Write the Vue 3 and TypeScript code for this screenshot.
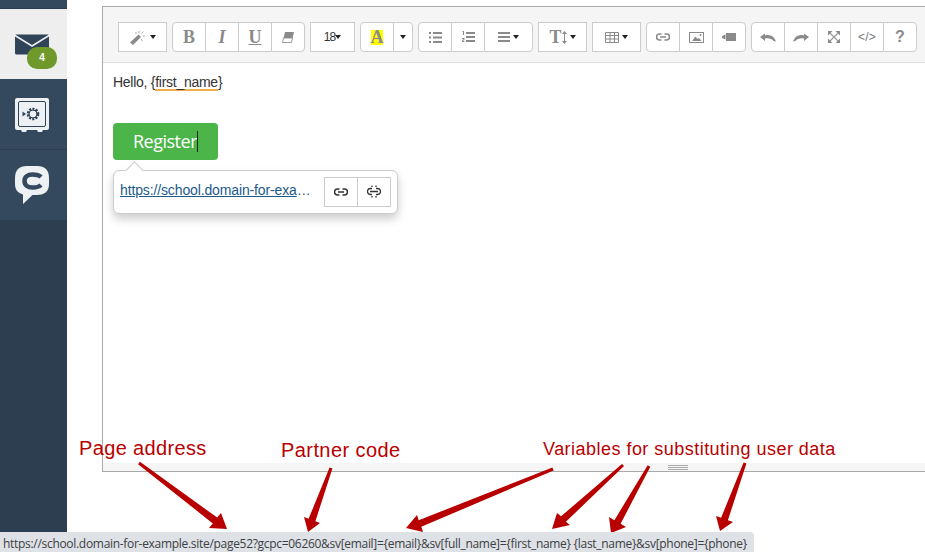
<script setup lang="ts">
type P = [number, number]
interface Arrow { s: P; t: P; a: P; b: P }

const arrows: Arrow[] = [
  { s: [139, 463], t: [227, 529], a: [209, 528], b: [221, 513] },
  { s: [331, 468], t: [308, 532], a: [304, 517], b: [320, 523] },
  { s: [553, 469], t: [406, 528], a: [417, 515], b: [423, 532] },
  { s: [623, 465], t: [552, 529], a: [557, 513], b: [570, 525] },
  { s: [649, 466], t: [611, 533], a: [609, 517], b: [626, 527] },
  { s: [745, 463], t: [720, 531], a: [716, 516], b: [733, 522] },
]

function arrowPoints(x: Arrow): string {
  const dx = x.t[0] - x.s[0]
  const dy = x.t[1] - x.s[1]
  const len = Math.hypot(dx, dy)
  const nx = -dy / len
  const ny = dx / len
  const mid: P = [(x.a[0] + x.b[0]) / 2, (x.a[1] + x.b[1]) / 2]
  const side = (x.a[0] - mid[0]) * nx + (x.a[1] - mid[1]) * ny > 0 ? 1 : -1
  const sw = 1.5
  const bw = 3.6
  const pts: P[] = [
    [x.s[0] + nx * sw * side, x.s[1] + ny * sw * side],
    [mid[0] + nx * bw * side, mid[1] + ny * bw * side],
    x.a,
    x.t,
    x.b,
    [mid[0] - nx * bw * side, mid[1] - ny * bw * side],
    [x.s[0] - nx * sw * side, x.s[1] - ny * sw * side],
  ]
  return pts.map((p) => `${p[0].toFixed(1)},${p[1].toFixed(1)}`).join(' ')
}

const statusUrl =
  'https://school.domain-for-example.site/page52?gcpc=06260&sv[email]={email}&sv[full_name]={first_name} {last_name}&sv[phone]={phone}'
</script>

<template>
  <div class="page">
    <aside class="sidebar">
      <div class="strip"></div>
      <div class="nav-item active">
        <svg width="34" height="21" viewBox="0 0 34 21">
          <path d="M1 0.5H33a1 1 0 0 1 .6 .3L17 11 .4 .8A1 1 0 0 1 1 .5Z" fill="#2f4359" />
          <path d="M0 2.400 17 13 34 2.400V19a1.500 1.500 0 0 1-1.500 1.500h-31A1.500 1.500 0 0 1 0 19Z" fill="#2f4359" />
        </svg>
        <span class="badge">4</span>
      </div>
      <div class="nav-item safe">
        <svg width="34" height="34" viewBox="0 0 34 34">
          <path d="M2 0H32a2 2 0 0 1 2 2V30a2 2 0 0 1-2 2H28l-1 2H23l-1-2H12l-1 2H7l-1-2H2a2 2 0 0 1-2-2V2A2 2 0 0 1 2 0Z" fill="#eef1f3" />
          <rect x="3.500" y="3.500" width="27" height="25" rx="1.500" fill="none" stroke="#2f4359" stroke-width="1" />
          <circle cx="18" cy="16" r="5" fill="none" stroke="#2f4359" stroke-width="2.600" stroke-dasharray="2 1.200" />
          <circle cx="18" cy="16" r="4" fill="none" stroke="#2f4359" stroke-width="1" />
          <path d="M7.500 13.500 11 16l-3.500 2.500Z" fill="#2f4359" />
        </svg>
      </div>
      <div class="nav-item">
        <svg width="34" height="38" viewBox="0 0 34 38">
          <path d="M12 0H22C30 0 34 4 34 12V18C34 25 30 29 22 29H17.500L8 38 8 28.500C3 27 0 24 0 18V12C0 4 4 0 12 0Z" fill="#eef1f3" />
          <path d="M26 11C24 9 21 8.500 17.500 8.500 12.500 8.500 9.500 11 9.500 15S12.500 21.500 17.500 21.500C21 21.500 24 21 26 19" fill="none" stroke="#34495f" stroke-width="4.500" />
        </svg>
      </div>
    </aside>

    <main class="main">
      <section class="editor">
        <div class="toolbar">
          <div class="group">
            <button class="btn w49">
              <svg width="17" height="15" viewBox="0 0 17 15">
                <path d="M0 12.500 8.500 4.500 11 7 3 15Z" fill="#8a8a8a" />
                <path d="M9 1V3.500M11.500 3.500 13.500 1.500M13 6H15M11 9 12.500 11M5 3H7" stroke="#a5a5a5" fill="none" stroke-width="1" />
              </svg>
              <i class="caret"></i>
            </button>
          </div>
          <div class="group">
            <button class="btn"><span class="ser b">B</span></button>
            <button class="btn"><span class="ser it">I</span></button>
            <button class="btn"><span class="ser u">U</span></button>
            <button class="btn">
              <svg width="12" height="11" viewBox="0 0 12 11">
                <path d="M3 0H12L9.500 10.500H0.500Z" fill="#8a8a8a" />
                <path d="M1.500 6H10.500L9.500 10.500H0.500Z" fill="#fff" stroke="#8a8a8a" stroke-width=".8" />
              </svg>
            </button>
          </div>
          <div class="group">
            <button class="btn w45 size">18<i class="caret small"></i></button>
          </div>
          <div class="group">
            <button class="btn"><span class="ser b hl">A</span></button>
            <button class="btn w20"><i class="caret"></i></button>
          </div>
          <div class="group">
            <button class="btn">
              <svg width="13" height="11" viewBox="0 0 13 11" fill="#8a8a8a">
                <path d="M0 0h2v2H0zM4 0h9v2H4zM0 4.500h2v2H0zM4 4.500h9v2H4zM0 9h2v2H0zM4 9h9v2H4z" />
              </svg>
            </button>
            <button class="btn">
              <svg width="13" height="12" viewBox="0 0 13 12" fill="#8a8a8a">
                <path d="M4 1h9v2H4zM4 5h9v2H4zM4 9h9v2H4zM.5 0H2V4H1V1H.5zM0 7H2.500V8.500L1 10H2.500V11H0V9.800L1.500 8.300V8H0z" />
              </svg>
            </button>
            <button class="btn w49">
              <svg width="12" height="10" viewBox="0 0 12 10" fill="#8a8a8a">
                <path d="M0 0h12v2H0zM0 4h12v2H0zM0 8h12v2H0z" />
              </svg>
              <i class="caret"></i>
            </button>
          </div>
          <div class="group">
            <button class="btn w49">
              <span class="ser b lh">T</span>
              <svg width="5" height="13" viewBox="0 0 5 13" fill="#8a8a8a">
                <path d="M2.500 0 5 3H3V10H5L2.500 13 0 10H2V3H0Z" />
              </svg>
              <i class="caret"></i>
            </button>
          </div>
          <div class="group">
            <button class="btn w49">
              <svg width="14" height="11" viewBox="0 0 14 11" fill="none" stroke="#8a8a8a" stroke-width="1">
                <path d="M.5 .5h13v10H.5zM.5 3.500h13M.5 7h13M5 .5v10M9.500 .5v10" />
              </svg>
              <i class="caret"></i>
            </button>
          </div>
          <div class="group">
            <button class="btn">
              <svg width="14" height="8" viewBox="0 0 14 8" fill="none" stroke="#8a8a8a" stroke-width="1.700">
                <path d="M5.500 1H3.500a3 3 0 0 0 0 6H5.500M8.500 1H10.500a3 3 0 0 1 0 6H8.500M4 4H10" />
              </svg>
            </button>
            <button class="btn">
              <svg width="15" height="11" viewBox="0 0 15 11">
                <rect x=".5" y=".5" width="14" height="10" fill="#fff" stroke="#8a8a8a" />
                <path d="M3 9 6.500 4.500 8.500 7 10 6 12.500 9Z" fill="#8a8a8a" />
                <circle cx="11.500" cy="3" r="1" fill="#8a8a8a" />
              </svg>
            </button>
            <button class="btn">
              <svg width="14" height="8" viewBox="0 0 14 8" fill="#8a8a8a">
                <path d="M4 0H14V8H4ZM0 3 3.500 1.500V6.500L0 5Z" />
              </svg>
            </button>
          </div>
          <div class="group">
            <button class="btn">
              <svg width="16" height="9" viewBox="0 0 16 9" fill="#8a8a8a">
                <path d="M0 4 5 .5V2.500C10 1 14 3 16 8.500L13.500 8C12 6 9 5 5 5.500V8Z" />
              </svg>
            </button>
            <button class="btn">
              <svg width="16" height="9" viewBox="0 0 16 9" fill="#8a8a8a">
                <path d="M16 4 11 .5V2.500C6 1 2 3 0 8.500L2.500 8C4 6 7 5 11 5.500V8Z" />
              </svg>
            </button>
            <button class="btn">
              <svg width="12" height="12" viewBox="0 0 12 12">
                <path d="M0 0H4.500L0 4.500ZM12 0V4.500L7.500 0ZM0 12V7.500L4.500 12ZM12 12H7.500L12 7.500Z" fill="#8a8a8a" />
                <path d="M2 2 10 10M10 2 2 10" stroke="#9a9a9a" stroke-width="1.200" />
              </svg>
            </button>
            <button class="btn code">&lt;/&gt;</button>
            <button class="btn help">?</button>
          </div>
        </div>

        <div class="content">
          <p class="hello">Hello, {<span class="var">first_name</span>}</p>
          <div class="cta">Register<span class="text-caret"></span></div>
        </div>

        <div class="resize">
          <span class="grip"></span>
        </div>

        <div class="popover">
          <a class="pop-link"><span class="pop-url">https://school.domain-for-exa</span>…</a>
          <div class="pop-actions">
            <button class="pop-btn">
              <svg width="14" height="8" viewBox="0 0 14 8" fill="none" stroke="#333" stroke-width="1.500">
                <path d="M5.500 1H3.500a3 3 0 0 0 0 6H5.500M8.500 1H10.500a3 3 0 0 1 0 6H8.500M4 4H10" />
              </svg>
            </button>
            <button class="pop-btn">
              <svg width="14" height="14" viewBox="0 0 14 14" fill="none" stroke="#333" stroke-width="1.300">
                <path d="M5 3.500H3.500a3 3 0 0 0 0 6H5M9 3.500H10.500a3 3 0 0 1 0 6H9M3 6.500H11M5 .5V2M9 .5V2M5 11V12.500M9 11V12.500" />
              </svg>
            </button>
          </div>
        </div>
      </section>
    </main>

    <svg class="arrows" width="925" height="552" viewBox="0 0 925 552">
      <polygon v-for="(a, i) in arrows" :key="i" :points="arrowPoints(a)" fill="#b80000" />
    </svg>

    <span class="note n1">Page address</span>
    <span class="note n2">Partner code</span>
    <span class="note n3">Variables for substituting user data</span>

    <div class="status">{{ statusUrl }}</div>
  </div>
</template>

<style>
html, body { margin: 0; overflow: hidden; background: #fff; }
</style>

<style scoped>
.page {
  position: relative;
  display: flex;
  width: 925px;
  height: 552px;
  overflow: hidden;
  background: #fff;
  font-family: "Liberation Sans", Arial, sans-serif;
}
.sidebar {
  width: 67px;
  flex: none;
  background: #2d3e50;
  display: flex;
  flex-direction: column;
}
.strip { height: 9px; background: #34495e; box-shadow: inset 0 -1px 0 #2d3e50; }
.nav-item {
  position: relative;
  height: 70px;
  padding-right: 3px;
  box-sizing: content-box;
  width: 64px;
  background: #34495e;
  border-bottom: 1px solid #2d3e50;
  display: flex;
  align-items: center;
  justify-content: center;
}
.nav-item.active { background: #eee; border-bottom: 0; }
.safe svg { margin-top: 2px; }
.badge {
  position: absolute;
  left: 27px;
  top: 38px;
  width: 30px;
  height: 22px;
  border-radius: 10px;
  background: #6f9a2b;
  color: #fff;
  font: bold 10px/22px "Liberation Sans", sans-serif;
  text-align: center;
}
.main { flex: 1; min-width: 0; padding: 6px 0 0 35px; }
.editor {
  position: relative;
  width: 900px;
  height: 466px;
  box-sizing: border-box;
  border: 1px solid #a9a9a9;
  display: flex;
  flex-direction: column;
}
.toolbar {
  height: 56px;
  flex: none;
  box-sizing: border-box;
  background: #f5f5f5;
  border-bottom: 1px solid #ddd;
  padding: 15px 0 0 15px;
  display: flex;
  gap: 5px;
}
.group { display: flex; height: 30px; }
.btn {
  width: 34px;
  height: 30px;
  padding: 0;
  margin: 0 0 0 -1px;
  box-sizing: border-box;
  background: #fff;
  border: 1px solid #ccc;
  display: flex;
  align-items: center;
  justify-content: center;
  gap: 3px;
  color: #8a8a8a;
  font-family: "Liberation Sans", sans-serif;
}
.group .btn:first-child { margin-left: 0; border-radius: 4px 0 0 4px; }
.group .btn:last-child { border-radius: 0 4px 4px 0; }
.group .btn:only-child { border-radius: 0; }
.w49 { width: 49px; }
.w45 { width: 45px; }
.w20 { width: 20px; }
.caret {
  display: inline-block;
  width: 0;
  height: 0;
  border-left: 3.5px solid transparent;
  border-right: 3.5px solid transparent;
  border-top: 4px solid #222;
}
.caret.small { border-left-width: 3px; border-right-width: 3px; margin-left: -3px; }
.size { font-size: 12px; letter-spacing: -.8px; color: #333; }
.ser { font-family: "Liberation Serif", serif; font-size: 18px; line-height: 1; }
.b { font-weight: bold; }
.it { font-style: italic; font-weight: bold; }
.u { text-decoration: underline; font-weight: bold; }
.lh { margin-right: -3px; }
.hl { background: #ff0; line-height: 15px; width: 12px; display: flex; justify-content: center; }
.code { font-size: 12px; letter-spacing: .2px; color: #777; }
.help { font-size: 16px; font-weight: bold; }
.content {
  flex: 1;
  padding: 9px 0 0 10px;
  color: #333;
  font-size: 14px;
  letter-spacing: -.27px;
}
.hello { margin: 0; height: 20px; line-height: 20px; }
.var { border-bottom: 2px solid #f0ad4e; display: inline-block; line-height: 14px; }
.cta {
  margin-top: 31px;
  width: 105px;
  height: 37px;
  box-sizing: border-box;
  padding-left: 20px;
  background: #4bb54a;
  border-radius: 4px;
  color: #fff;
  font: 18px/37px "Open Sans", sans-serif;
  letter-spacing: -.5px;
  display: flex;
  align-items: center;
}
.text-caret { width: 1px; height: 21px; background: #222; }
.resize {
  height: 8px;
  flex: none;
  background: #f5f5f5;
  display: flex;
  padding-left: 565px;
}
.grip {
  width: 20px;
  height: 5px;
  margin-top: 2px;
  border-top: 1px solid #aaa;
  border-bottom: 1px solid #aaa;
  background: linear-gradient(#aaa, #aaa) center / 100% 1px no-repeat;
  box-sizing: border-box;
}
.popover {
  position: absolute;
  left: 10px;
  top: 163px;
  width: 285px;
  height: 44px;
  box-sizing: border-box;
  background: #fff;
  border: 1px solid #ccc;
  border-radius: 6px;
  box-shadow: 0 5px 10px rgba(0, 0, 0, .2);
  padding: 6px 6px 0 6px;
  display: flex;
  justify-content: space-between;
}
.popover::before {
  content: "";
  position: absolute;
  left: 14px;
  top: -7px;
  width: 12px;
  height: 12px;
  background: #fff;
  border-left: 1px solid #ccc;
  border-top: 1px solid #ccc;
  transform: rotate(45deg);
}
.pop-link {
  font-size: 14px;
  letter-spacing: -.13px;
  line-height: 27px;
  color: #1c5a8a;
  white-space: nowrap;
}
.pop-url { text-decoration: underline; }
.pop-actions { display: flex; }
.pop-btn {
  width: 34px;
  height: 30px;
  padding: 0;
  background: #fff;
  border: 1px solid #ccc;
  display: flex;
  align-items: center;
  justify-content: center;
}
.pop-btn + .pop-btn { margin-left: -1px; }
.arrows { position: absolute; left: 0; top: 0; pointer-events: none; }
.note {
  position: absolute;
  color: #b80000;
  font-size: 20px;
  line-height: 24px;
  letter-spacing: .35px;
  white-space: nowrap;
}
.n1 { left: 79px; top: 436px; }
.n2 { left: 281px; top: 438px; letter-spacing: .42px; }
.n3 { left: 543px; top: 437px; font-size: 18px; letter-spacing: .47px; }
.status {
  position: absolute;
  left: 0;
  bottom: 0;
  height: 20px;
  width: 754px;
  box-sizing: border-box;
  padding-left: 3px;
  background: #dee1e6;
  border-top-right-radius: 4px;
  color: #3c4043;
  font: 12px/24px "Open Sans", sans-serif;
  letter-spacing: -.3px;
  white-space: nowrap;
  overflow: hidden;
}
</style>
